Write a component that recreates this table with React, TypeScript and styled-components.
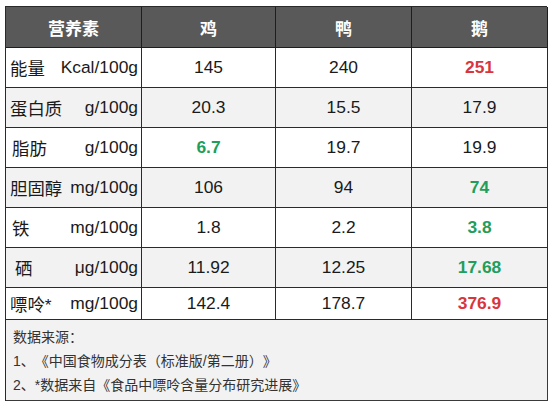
import React from "react";
import styled, { createGlobalStyle } from "styled-components";

const Global = createGlobalStyle`
  html, body { margin: 0; padding: 0; background: #ffffff; }
  body {
    font-family: "Liberation Sans", "Noto Sans CJK SC", sans-serif;
    text-spacing-trim: space-all;
  }
`;

const Page = styled.div`
  padding: 6px 0 0 5px;
`;

const Table = styled.div`
  width: 542px;
  display: grid;
  grid-template-columns: 136px 134px 136px 136px;
  border-top: 1px solid #2a2a2a;
  border-left: 1px solid #2a2a2a;
  box-sizing: border-box;
`;

const HeadCell = styled.div`
  height: 41px;
  box-sizing: border-box;
  background: #595959;
  color: #ffffff;
  font-weight: 700;
  font-size: 17px;
  display: flex;
  align-items: center;
  justify-content: center;
  border-right: 1px solid #1e1e1e;
  border-bottom: 1px solid #1e1e1e;
`;

const Cell = styled.div<{ $shade: boolean; $h: number }>`
  height: ${(p) => p.$h}px;
  box-sizing: border-box;
  background: ${(p) => (p.$shade ? "#f2f2f2" : "#ffffff")};
  color: #1a1a1a;
  font-size: 17.4px;
  display: flex;
  align-items: center;
  justify-content: center;
  border-right: 1px solid #2a2a2a;
  border-bottom: 1px solid #2a2a2a;
`;

const LabelCell = styled(Cell)<{ $indent: number }>`
  justify-content: space-between;
  padding: 0 3px 0 ${(p) => p.$indent}px;
`;

const Value = styled.span<{ $tone?: "red" | "green" }>`
  color: ${(p) => (p.$tone === "red" ? "#d8353d" : p.$tone === "green" ? "#1f9e5c" : "#1a1a1a")};
  font-weight: ${(p) => (p.$tone ? 700 : 400)};
`;

const Note = styled.div`
  grid-column: 1 / -1;
  height: 81px;
  box-sizing: border-box;
  background: #f2f2f2;
  border-right: 1.5px solid #3a3a3a;
  border-bottom: 1.5px solid #3a3a3a;
  padding: 5px 0 0 7px;
  font-size: 14px;
  color: #333333;
  display: flex;
  flex-direction: column;
  line-height: 24px;
  text-spacing-trim: space-all;
`;

type Tone = "red" | "green" | undefined;
type Row = { name: string; unit: string; indent?: number; vals: [string, Tone][]; h?: number };

const rows: Row[] = [
  { name: "能量", unit: "Kcal/100g", vals: [["145", undefined], ["240", undefined], ["251", "red"]] },
  { name: "蛋白质", unit: "g/100g", vals: [["20.3", undefined], ["15.5", undefined], ["17.9", undefined]] },
  { name: "脂肪", unit: "g/100g", indent: 6, vals: [["6.7", "green"], ["19.7", undefined], ["19.9", undefined]] },
  { name: "胆固醇", unit: "mg/100g", vals: [["106", undefined], ["94", undefined], ["74", "green"]] },
  { name: "铁", unit: "mg/100g", indent: 6, vals: [["1.8", undefined], ["2.2", undefined], ["3.8", "green"]] },
  { name: "硒", unit: "μg/100g", indent: 9, vals: [["11.92", undefined], ["12.25", undefined], ["17.68", "green"]] },
  { name: "嘌呤*", unit: "mg/100g", h: 32, vals: [["142.4", undefined], ["178.7", undefined], ["376.9", "red"]] },
];

export default function App() {
  return (
    <Page>
      <Global />
      <Table>
        <HeadCell>营养素</HeadCell>
        <HeadCell>鸡</HeadCell>
        <HeadCell>鸭</HeadCell>
        <HeadCell>鹅</HeadCell>
        {rows.map((r, i) => {
          const shade = i % 2 === 1;
          const h = r.h ?? 40;
          return (
            <React.Fragment key={r.name}>
              <LabelCell $shade={shade} $h={h} $indent={r.indent ?? 4}>
                <span>{r.name}</span>
                <span>{r.unit}</span>
              </LabelCell>
              {r.vals.map(([v, t], j) => (
                <Cell key={j} $shade={shade} $h={h}>
                  <Value $tone={t}>{v}</Value>
                </Cell>
              ))}
            </React.Fragment>
          );
        })}
        <Note>
          <span>数据来源：</span>
          <span>1、《中国食物成分表（标准版/第二册）》</span>
          <span>2、*数据来自《食品中嘌呤含量分布研究进展》</span>
        </Note>
      </Table>
    </Page>
  );
}
